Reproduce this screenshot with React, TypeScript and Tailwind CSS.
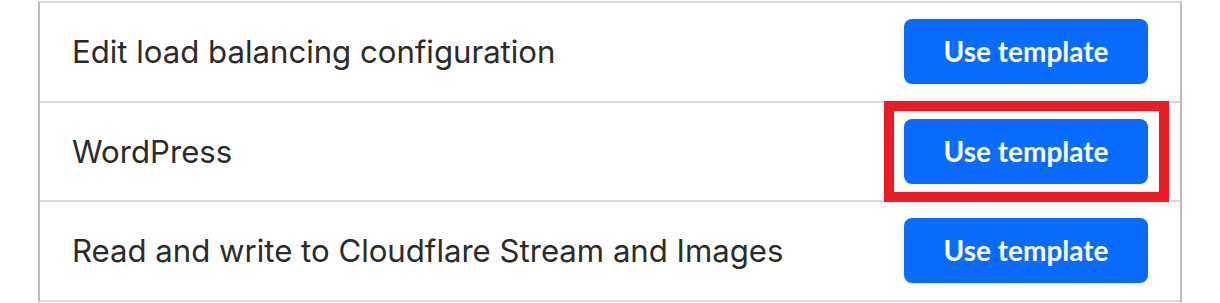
import React from 'react';

interface TemplateRow {
  id: string;
  name: string;
  highlighted?: boolean;
}

const rows: TemplateRow[] = [
  { id: 'lb', name: 'Edit load balancing configuration' },
  { id: 'wp', name: 'WordPress', highlighted: true },
  { id: 'stream', name: 'Read and write to Cloudflare Stream and Images' },
];

const App: React.FC = () => {
  return (
    <div className="w-[1220px] h-[303px] overflow-hidden bg-white">
      <div className="ml-[38px] w-[1144px] mt-[1px] border-x-2 border-x-[#bdbdbd] border-t-2 border-t-[#d9d9d9]">
        {rows.map((row) => (
          <div
            key={row.id}
            className="flex items-center justify-between h-[99.6px] border-b-2 border-[#d9d9d9] pl-[32px] pr-[32px]"
          >
            <p
              className="text-[31.15px] text-[#2b2b2b] pt-[1px]"
              style={{ fontFamily: 'Inter, "Noto Sans", sans-serif' }}
            >
              {row.name}
            </p>
            <div className="relative">
              <button
                className="w-[244px] h-[65px] rounded-lg bg-[#0a6cff] text-white text-[28px] font-bold pb-[1px]"
                style={{ fontFamily: 'Lato, "Open Sans", sans-serif' }}
              >
                Use template
              </button>
              {row.highlighted && (
                <div className="absolute -left-[20px] -right-[21px] -top-[18px] -bottom-[18px] border-[10px] border-[#ed1c24] pointer-events-none" />
              )}
            </div>
          </div>
        ))}
      </div>
    </div>
  );
};

export default App;
